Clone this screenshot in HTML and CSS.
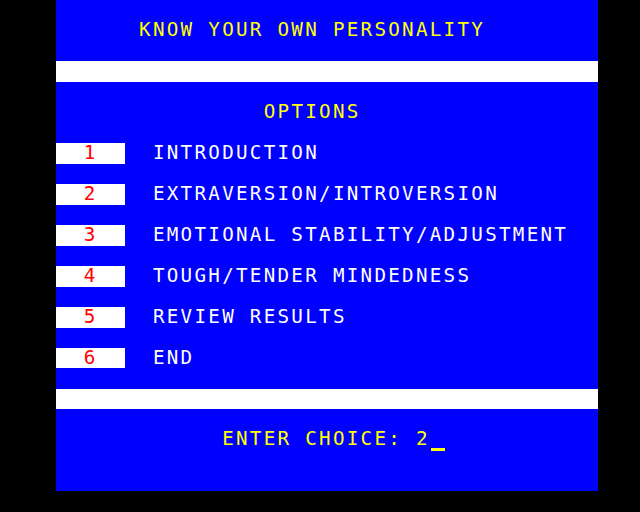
FILE: index.html
```html
<!DOCTYPE html>
<html>
<head>
<meta charset="utf-8">
<link rel="stylesheet" href="styles.css">
<title>Know Your Own Personality</title>
</head>
<body>
<div class="screen">
  <div class="row"></div>
  <div class="row yellow at6">KNOW YOUR OWN PERSONALITY</div>
  <div class="row"></div>
  <div class="row bar"></div>
  <div class="row"></div>
  <div class="row yellow at15">OPTIONS</div>
  <div class="row"></div>
  <div class="row item"><span class="num">1</span><span class="label">INTRODUCTION</span></div>
  <div class="row"></div>
  <div class="row item"><span class="num">2</span><span class="label">EXTRAVERSION/INTROVERSION</span></div>
  <div class="row"></div>
  <div class="row item"><span class="num">3</span><span class="label">EMOTIONAL STABILITY/ADJUSTMENT</span></div>
  <div class="row"></div>
  <div class="row item"><span class="num">4</span><span class="label">TOUGH/TENDER MINDEDNESS</span></div>
  <div class="row"></div>
  <div class="row item"><span class="num">5</span><span class="label">REVIEW RESULTS</span></div>
  <div class="row"></div>
  <div class="row item"><span class="num">6</span><span class="label">END</span></div>
  <div class="row"></div>
  <div class="row bar"></div>
  <div class="row"></div>
  <div class="row yellow at12"><span class="prompt">ENTER CHOICE: 2<span class="cursor"></span></span></div>
  <div class="row"></div>
  <div class="row"></div>
</div>
</body>
</html>
```

FILE: styles.css
```css
:root {
  --c: 13.85px;
  --r: 20.48px;
}
html, body {
  margin: 0;
  padding: 0;
  background: #000;
  width: 640px;
  height: 512px;
  overflow: hidden;
}
.screen {
  margin-left: 56px;
  width: 542px;
  background: #0000ff;
  font-family: "DejaVu Sans Mono", "Liberation Mono", monospace;
  font-size: 19.2px;
  letter-spacing: 2.29px;
  line-height: 18.6px;
  color: #fff;
}
.row {
  height: var(--r);
  display: flex;
  align-items: center;
  white-space: pre;
}
.bar {
  background: #fff;
}
.yellow {
  color: #ffff00;
}
.at6 { padding-left: calc(var(--c) * 6); }
.at12 { padding-left: calc(var(--c) * 12); }
.at15 { padding-left: calc(var(--c) * 15); }
.item {
  align-items: stretch;
}
.num {
  width: 69px;
  box-sizing: border-box;
  padding-left: calc(var(--c) * 2);
  background: #fff;
  color: #ff0000;
  display: flex;
  align-items: center;
}
.label {
  padding-left: calc(var(--c) * 7 - 69px);
  display: flex;
  align-items: center;
}
.cursor {
  display: inline-block;
  width: 14px;
  height: 3px;
  margin-left: 1px;
  background: #ffff00;
  vertical-align: -6px;
}
```
